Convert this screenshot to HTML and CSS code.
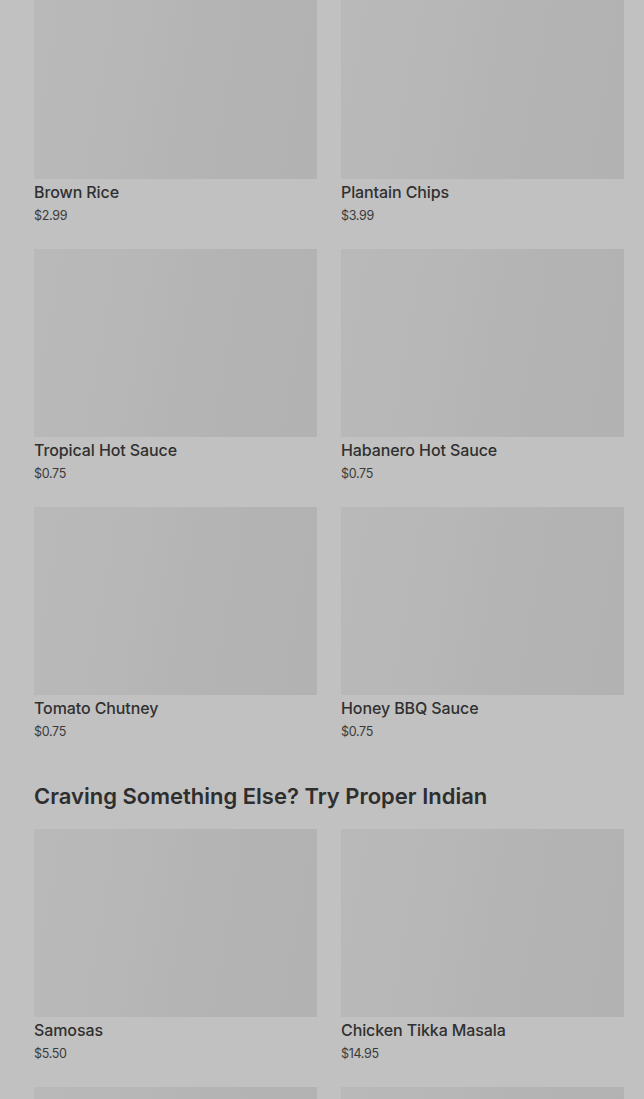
FILE: index.html
```html
<!DOCTYPE html>
<html>
<head>
<meta charset="utf-8">
<link rel="stylesheet" href="styles.css">
</head>
<body>
<div class="page">
  <div class="grid first">
    <div class="card"><div class="thumb"></div><div class="name">Brown Rice</div><div class="price">$2.99</div></div>
    <div class="card"><div class="thumb"></div><div class="name">Plantain Chips</div><div class="price">$3.99</div></div>
    <div class="card"><div class="thumb"></div><div class="name">Tropical Hot Sauce</div><div class="price">$0.75</div></div>
    <div class="card"><div class="thumb"></div><div class="name">Habanero Hot Sauce</div><div class="price">$0.75</div></div>
    <div class="card"><div class="thumb"></div><div class="name">Tomato Chutney</div><div class="price">$0.75</div></div>
    <div class="card"><div class="thumb"></div><div class="name">Honey BBQ Sauce</div><div class="price">$0.75</div></div>
  </div>
  <h2 class="section-title">Craving Something Else? Try Proper Indian</h2>
  <div class="grid">
    <div class="card"><div class="thumb"></div><div class="name">Samosas</div><div class="price">$5.50</div></div>
    <div class="card"><div class="thumb"></div><div class="name">Chicken Tikka Masala</div><div class="price">$14.95</div></div>
    <div class="card"><div class="thumb"></div></div>
    <div class="card"><div class="thumb"></div></div>
  </div>
</div>
</body>
</html>
```

FILE: styles.css
```css
html, body {
  margin: 0;
  padding: 0;
  background: #c1c1c1;
  overflow: hidden;
}
body {
  font-family: Inter, "Noto Sans", sans-serif;
  color: #2f2f2f;
}
.page {
  padding: 0 20px 0 34px;
  margin-top: -9px;
}
.grid {
  display: grid;
  grid-template-columns: 283px 283px;
  column-gap: 24px;
  row-gap: 24px;
}
.thumb {
  height: 188px;
  background: linear-gradient(100deg, #b9b9b9 0%, #b7b7b7 35%, #b4b4b4 55%, #b2b2b2 100%);
}
.name {
  margin-top: 3px;
  font-size: 16px;
  line-height: 20px;
  font-weight: 500;
  letter-spacing: -0.1px;
  color: #303030;
}
.price {
  margin-top: 5px;
  font-size: 12.5px;
  line-height: 18px;
  font-weight: 400;
  letter-spacing: -0.3px;
  color: #3a3a3a;
}
.section-title {
  margin: 41px 0 19px;
  font-size: 22px;
  line-height: 28px;
  font-weight: 600;
  letter-spacing: 0;
  color: #2e2e2e;
}
```
